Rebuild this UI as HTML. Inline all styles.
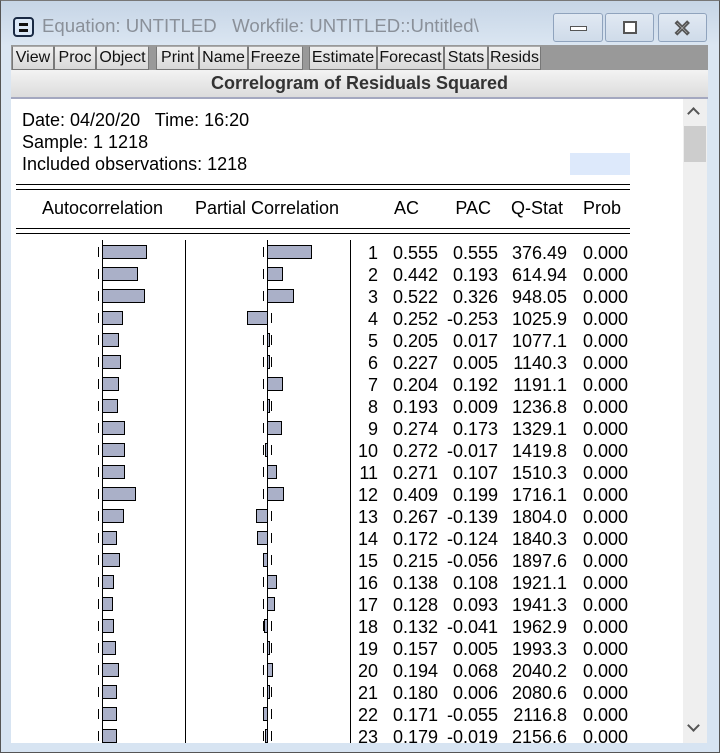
<!DOCTYPE html>
<html><head><meta charset="utf-8"><style>
*{margin:0;padding:0;box-sizing:border-box}
body{width:720px;height:753px;overflow:hidden;background:#d7e4f2;font-family:"Liberation Sans",Arial,sans-serif;position:relative}
.frame{position:absolute;left:0;top:0;width:720px;height:753px;border:1px solid #555;border-top-color:#777;background:linear-gradient(#c6d5e6,#dbe6f2 45px,#d7e4f2)}
.title{position:absolute;left:42px;top:15px;font-family:"Liberation Sans Narrow","Liberation Sans",sans-serif;font-size:18.6px;color:#8a9099;white-space:pre}
.ico{position:absolute;left:13px;top:17px;width:21px;height:20px;border:2px solid #1a2a44;border-radius:4px;background:#dbe8f7}
.ico:before,.ico:after{content:"";position:absolute;left:4px;width:9px;height:3px;background:#111}
.ico:before{top:4px}.ico:after{top:10px}
.wb{position:absolute;top:13px;height:29px;border:1px solid #8fa3bd;border-radius:3px;background:linear-gradient(#e1e9f3,#cfdbe9)}
.tb{position:absolute;left:11px;top:45px;width:697px;height:25px;background:#999}
.btn{position:absolute;top:46px;height:24px;background:linear-gradient(#f0f0f0,#d8d8d8);border:1px solid #777;border-top-color:#aaa;font-family:"Liberation Sans Narrow","Liberation Sans",sans-serif;font-size:16px;line-height:22px;text-align:center;color:#111}
.hdr{position:absolute;left:11px;top:70px;width:697px;height:29px;background:linear-gradient(#f3f3f3,#dcdcdc);border-bottom:2px solid #a4a8c0;font-weight:bold;font-size:18px;text-align:center;line-height:27px;color:#333}
.content{position:absolute;left:11px;top:99px;width:672px;height:644px;background:#fff;overflow:hidden}
.sb{position:absolute;left:683px;top:99px;width:24px;height:644px;background:#efefef}
.t{position:absolute;font-size:18px;color:#000;white-space:pre;line-height:18px}
.r{text-align:right}
.hl{position:absolute;height:2px;background:#000;left:5px;width:614px}
.vl{position:absolute;width:1px;background:#000;top:141px;height:510px}
.bar{position:absolute;height:14px;background:#aab0c8;border:1px solid #000}
.d{position:absolute;width:1px;height:10px;background:#000}
</style></head><body>
<div class="frame"></div>
<div class="ico"></div>
<div class="title">Equation: UNTITLED   Workfile: UNTITLED::Untitled\</div>
<div class="wb" style="left:553px;width:50px"><div style="position:absolute;left:16px;top:12px;width:17px;height:5px;border:1px solid #555;background:#fff"></div></div>
<div class="wb" style="left:605px;width:49px"><div style="position:absolute;left:17px;top:7px;width:14px;height:13px;border:2px solid #555;background:#fff"></div></div>
<div class="wb" style="left:658px;width:49px"><div style="position:absolute;left:14px;top:2px;font-size:22px;font-weight:bold;color:#fff;-webkit-text-stroke:1px #555">✕</div></div>
<div class="tb"></div>
<div class="btn" style="left:12px;width:42px">View</div>
<div class="btn" style="left:54px;width:42px">Proc</div>
<div class="btn" style="left:96px;width:53px">Object</div>
<div class="btn" style="left:156px;width:43px">Print</div>
<div class="btn" style="left:199px;width:49px">Name</div>
<div class="btn" style="left:248px;width:55px">Freeze</div>
<div class="btn" style="left:309px;width:68px">Estimate</div>
<div class="btn" style="left:377px;width:67px">Forecast</div>
<div class="btn" style="left:444px;width:44px">Stats</div>
<div class="btn" style="left:488px;width:53px">Resids</div>
<div class="hdr">Correlogram of Residuals Squared</div>
<div class="sb">
<div style="position:absolute;left:6px;top:10px;width:9px;height:9px;border-left:2px solid #555;border-top:2px solid #555;transform:rotate(45deg)"></div>
<div style="position:absolute;left:1px;top:27px;width:22px;height:36px;background:#cdcdcd"></div>
<div style="position:absolute;left:6px;top:622px;width:9px;height:9px;border-right:2px solid #555;border-bottom:2px solid #555;transform:rotate(45deg)"></div>
</div>
<div class="content" id="c">
<div class="t" style="left:11px;top:12px">Date: 04/20/20   Time: 16:20</div>
<div class="t" style="left:11px;top:34px">Sample: 1 1218</div>
<div class="t" style="left:11px;top:56px">Included observations: 1218</div>
<div style="position:absolute;left:559px;top:54px;width:60px;height:22px;background:#dde9fb"></div>
<div class="hl" style="top:85px;height:1px"></div><div class="hl" style="top:90px;height:1px"></div>
<div class="t" style="left:31px;top:100px">Autocorrelation</div>
<div class="t" style="left:184px;top:100px">Partial Correlation</div>
<div class="t r" style="left:370px;width:38px;top:100px">AC</div>
<div class="t r" style="left:440px;width:40px;top:100px">PAC</div>
<div class="t" style="left:500px;top:100px">Q-Stat</div>
<div class="t" style="left:572px;top:100px">Prob</div>
<div class="hl" style="top:129px;height:1px"></div><div class="hl" style="top:134px;height:1px"></div>
<div class="vl" style="left:91px"></div>
<div class="vl" style="left:174px"></div>
<div class="vl" style="left:256px"></div>
<div class="vl" style="left:339px"></div>
</div>
<script>
var D=[[0.555,0.555,"376.49"],[0.442,0.193,"614.94"],[0.522,0.326,"948.05"],[0.252,-0.253,"1025.9"],[0.205,0.017,"1077.1"],[0.227,0.005,"1140.3"],[0.204,0.192,"1191.1"],[0.193,0.009,"1236.8"],[0.274,0.173,"1329.1"],[0.272,-0.017,"1419.8"],[0.271,0.107,"1510.3"],[0.409,0.199,"1716.1"],[0.267,-0.139,"1804.0"],[0.172,-0.124,"1840.3"],[0.215,-0.056,"1897.6"],[0.138,0.108,"1921.1"],[0.128,0.093,"1941.3"],[0.132,-0.041,"1962.9"],[0.157,0.005,"1993.3"],[0.194,0.068,"2040.2"],[0.180,0.006,"2080.6"],[0.171,-0.055,"2116.8"],[0.179,-0.019,"2156.6"]];
var c=document.getElementById('c'),h='';
function bar(ax,v,y){var w=Math.max(Math.round(Math.abs(v)*80),2);var l=v>=0?ax:ax-w;h+='<div class="bar" style="left:'+l+'px;top:'+y+'px;width:'+(w+1)+'px"></div>';}
D.forEach(function(d,i){var y=153+22*i;var ty=y-8;
h+='<div class="d" style="left:87px;top:'+(y-5)+'px"></div><div class="d" style="left:252px;top:'+(y-5)+'px"></div><div class="d" style="left:260px;top:'+(y-5)+'px"></div>';
bar(91,d[0],y-7);bar(256,d[1],y-7);
h+='<div class="t r" style="left:330px;width:37px;top:'+ty+'px">'+(i+1)+'</div>';
h+='<div class="t r" style="left:370px;width:57px;top:'+ty+'px">'+d[0].toFixed(3)+'</div>';
h+='<div class="t r" style="left:430px;width:57px;top:'+ty+'px">'+d[1].toFixed(3)+'</div>';
h+='<div class="t r" style="left:490px;width:66px;top:'+ty+'px">'+d[2]+'</div>';
h+='<div class="t r" style="left:560px;width:57px;top:'+ty+'px">0.000</div>';});
c.insertAdjacentHTML('beforeend',h);
</script>
</body></html>
